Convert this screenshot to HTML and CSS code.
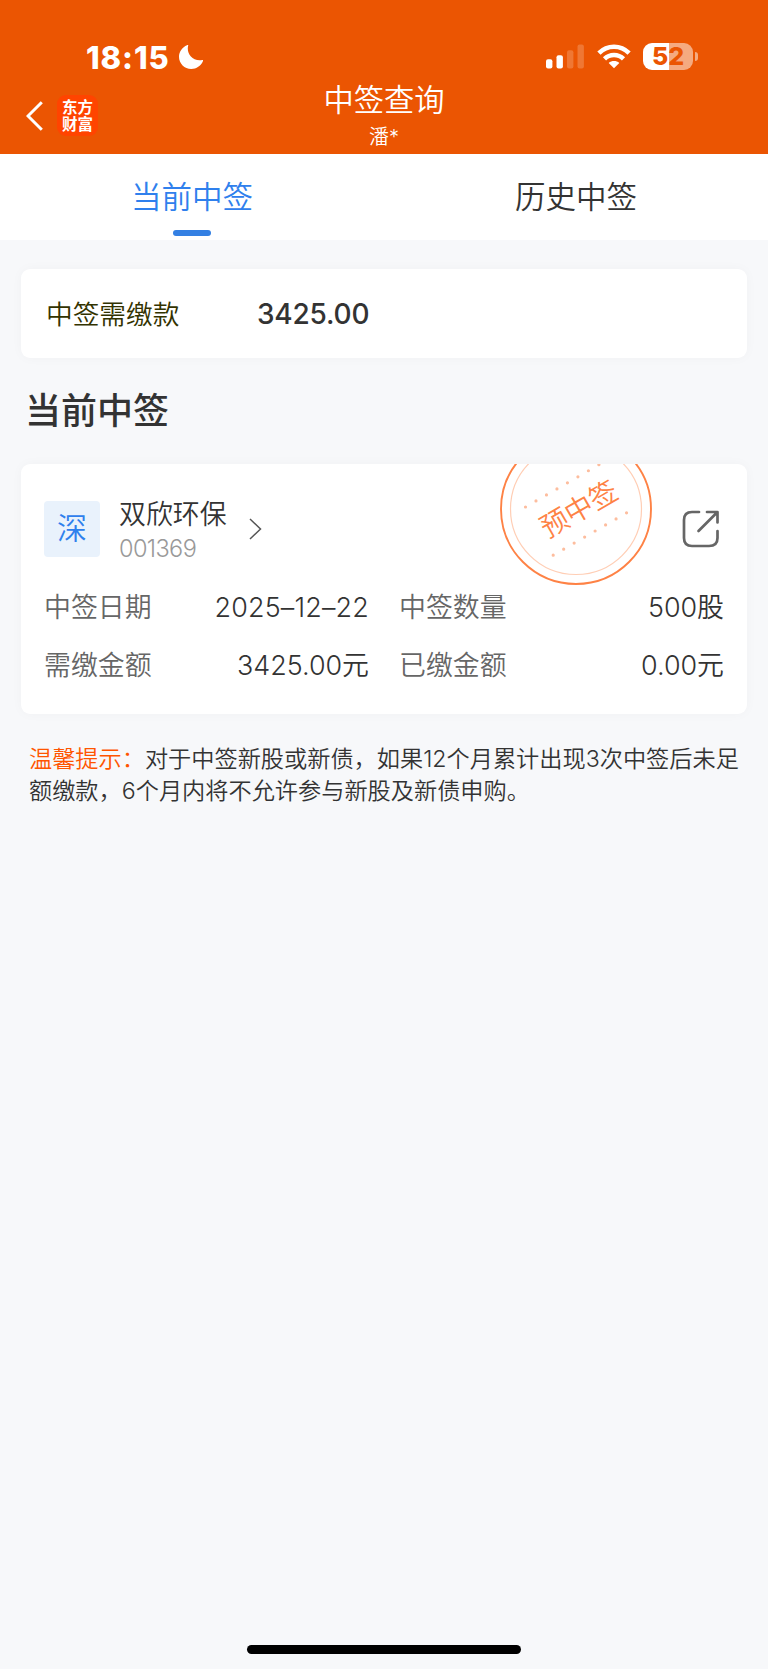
FILE: index.html
```
<!DOCTYPE html>
<html lang="zh-CN">
<head>
    <meta charset="UTF-8">
    <meta name="viewport" content="width=device-width, initial-scale=1.0">
    <title>中签查询</title>
    <link rel="stylesheet" href="styles.css">
</head>
<body>
    <header class="header">
        <div class="status-bar">
            <div class="status-left">
                <span class="time">18:15</span>
                <svg class="moon" width="24" height="24" viewBox="0 0 24 24">
                    <path d="M9.2 0.4C7.2 7.8 12.5 16.6 23.2 15.1C24.2 14.9 24.3 15.6 23.9 16.3C21.8 21 17.5 24 12.3 24C5.5 24 0 18.6 0 11.8C0 6.7 3.2 2.2 8 0.2C8.8 -0.1 9.4 -0.2 9.2 0.4Z" fill="#fff"/>
                </svg>
            </div>
            <div class="status-right">
                <svg width="38" height="25" viewBox="0 0 38 25" fill="#fff">
                    <rect x="0" y="15.3" width="6.4" height="9.2" rx="2"/>
                    <rect x="10.5" y="11.2" width="6.4" height="13.3" rx="2"/>
                    <rect x="21" y="6.2" width="6.4" height="18.3" rx="2" opacity="0.2"/>
                    <rect x="31.5" y="0.5" width="6.4" height="24" rx="2" opacity="0.2"/>
                </svg>
                <svg class="wifi" width="34" height="25" viewBox="0 0 34 25">
                    <g fill="none" stroke="#fff" stroke-width="4.5">
                        <path d="M1.9 9.2C10.3 0.7 23.7 0.7 32.1 9.2"/>
                        <path d="M7.5 14.9C12.8 9.6 21.2 9.6 26.5 14.9"/>
                    </g>
                    <path d="M17 24.3L11.7 19C14.7 16.4 19.3 16.4 22.3 19Z" fill="#fff"/>
                </svg>
                <div class="battery">
                    <div class="battery-body">52</div>
                    <div class="battery-cap"></div>
                </div>
            </div>
        </div>
        <div class="nav-bar">
            <div class="nav-left">
                <svg width="17" height="30" viewBox="0 0 17 30" fill="none" stroke="#fff" stroke-width="3">
                    <path d="M15.8 1.2L2 15L15.8 28.8"/>
                </svg>
                <div class="logo"><span>东方</span><span>财富</span></div>
            </div>
            <div class="nav-title">
                <h1>中签查询</h1>
                <p>潘*</p>
            </div>
        </div>
    </header>

    <nav class="tabs">
        <div class="tab active">当前中签</div>
        <div class="tab">历史中签</div>
    </nav>

    <main class="content">
        <section class="card summary">
            <span class="summary-label">中签需缴款</span>
            <span class="summary-value">3425.00</span>
        </section>

        <h2 class="section-title">当前中签</h2>

        <section class="card detail">
            <svg class="stamp" width="154" height="154" viewBox="0 0 154 154">
                <circle cx="77" cy="77" r="75" fill="none" stroke="#fe8245" stroke-width="1.9"/>
                <circle cx="77" cy="77" r="65.5" fill="none" stroke="#ffceb5" stroke-width="1.2"/>
                <g stroke="#fdbd9e" stroke-width="3.2" stroke-linecap="round" stroke-dasharray="0 12.1">
                    <path d="M26.5 75L102 31.5"/>
                    <path d="M54.2 123.2L130 79.4"/>
                </g>
                <text class="stamp-text" x="80" y="77" text-anchor="middle" dominant-baseline="central" transform="rotate(-30 80 77)">预中签</text>
            </svg>
            <div class="stock">
                <div class="market">深</div>
                <div class="stock-info">
                    <div class="stock-name">双欣环保</div>
                    <div class="stock-code">001369</div>
                </div>
                <svg class="arrow" width="13" height="22" viewBox="0 0 13 22" fill="none" stroke="#555" stroke-width="1.5">
                    <path d="M1 1L11.5 11L1 21"/>
                </svg>
                <svg class="share" width="38" height="38" viewBox="0 0 38 38" fill="none" stroke="#666" stroke-width="2.7" stroke-linecap="round" stroke-linejoin="round">
                    <path d="M17 2H10Q2 2 2 10V28Q2 36 10 36H27Q35.5 36 35.5 28V21"/>
                    <path d="M25 2H35.5V12.5M35 2.5L16.5 21"/>
                </svg>
            </div>
            <dl class="fields">
                <dt>中签日期</dt>
                <dd class="date">2025–12–22</dd>
                <dt class="second">中签数量</dt>
                <dd>500股</dd>
                <dt>需缴金额</dt>
                <dd>3425.00元</dd>
                <dt class="second">已缴金额</dt>
                <dd>0.00元</dd>
            </dl>
        </section>

        <p class="tips"><span class="tips-title">温馨提示：</span>对于中签新股或新债，如果12个月累计出现3次中签后未足<br>额缴款，6个月内将不允许参与新股及新债申购。</p>
    </main>

    <div class="home-indicator"></div>
</body>
</html>
```

FILE: styles.css
```
* {
    box-sizing: border-box;
    margin: 0;
    padding: 0;
}
body {
    display: flex;
    flex-direction: column;
    min-height: 1669px;
    background-color: #f7f8fa;
    color: #333;
    font-family: Inter, "Noto Sans CJK SC", sans-serif;
    font-weight: 350;
}
svg {
    display: block;
    flex: none;
}

/* Header */
.header {
    height: 154px;
    background-color: #eb5502;
    color: #fff;
}
.status-bar {
    display: flex;
    justify-content: space-between;
    height: 80px;
    padding: 43px 70px 0 86px;
}
.status-left,
.status-right {
    display: flex;
}
.time {
    width: 93px;
    font-size: 31px;
    font-weight: 800;
    line-height: 29px;
    letter-spacing: 0.9px;
}
.moon {
    margin-top: 2px;
}
.status-right svg {
    margin-top: 1px;
}
.wifi {
    margin: 0 12px 0 13px;
}
.battery {
    display: flex;
    align-items: center;
    height: 27px;
    gap: 2px;
}
.battery-body {
    width: 50px;
    height: 27px;
    border-radius: 9px;
    background: linear-gradient(to right, #fff 52%, #f5aa80 52%);
    color: #eb5502;
    font-size: 25px;
    font-weight: 800;
    line-height: 27px;
    text-align: center;
}
.battery-cap {
    width: 3px;
    height: 9px;
    border-radius: 0 4px 4px 0;
    background-color: #f5aa80;
}
.nav-bar {
    display: grid;
    grid-template-columns: 1fr 240px 1fr;
    height: 74px;
}
.nav-left {
    display: flex;
    align-items: center;
    gap: 14px;
    height: 71px;
    padding-left: 26px;
}
.logo {
    display: flex;
    flex-direction: column;
    align-items: center;
    justify-content: center;
    width: 41px;
    height: 41px;
    border-radius: 9px;
    background-color: #ff4400;
    font-size: 15.5px;
    font-weight: 700;
    line-height: 17px;
}
.nav-title {
    text-align: center;
}
.nav-title h1 {
    font-size: 30.3px;
    font-weight: 350;
    line-height: 40px;
}
.nav-title p {
    font-size: 20px;
    line-height: 35px;
}

/* Tabs */
.tabs {
    display: flex;
    height: 86px;
    background-color: #fff;
}
.tab {
    display: flex;
    flex: 1;
    flex-direction: column;
    align-items: center;
    font-size: 30.5px;
    line-height: 76px;
    padding-top: 5px;
}
.tab.active {
    color: #2f80ed;
}
.tab.active::after {
    content: '';
    flex: none;
    width: 38px;
    height: 6px;
    margin-top: -5px;
    border-radius: 3px;
    background-color: #3480e3;
}

/* Content */
.content {
    flex: 1;
    padding: 29px 21px 0;
}
.card {
    border-radius: 9px;
    background-color: #fff;
    box-shadow: 0 0 12px rgba(0, 0, 0, 0.03);
}
.summary {
    display: flex;
    align-items: center;
    height: 89px;
    padding-left: 25px;
}
.summary-label {
    width: 211px;
    padding-bottom: 3px;
    color: #333300;
    font-size: 26.7px;
}
.summary-value {
    font-size: 28px;
    font-weight: 500;
    letter-spacing: -0.2px;
}
.section-title {
    height: 106px;
    padding-left: 4px;
    font-size: 36px;
    font-weight: 500;
    line-height: 107px;
}
.detail {
    position: relative;
    height: 250px;
    padding: 37px 23px 0 23px;
    overflow: hidden;
}
.stamp {
    position: absolute;
    top: -32px;
    left: 477.5px;
}
.stamp-text {
    fill: #fe8245;
    font-size: 28px;
}
.stock {
    display: flex;
    align-items: center;
    height: 56px;
}
.market {
    width: 56px;
    height: 56px;
    border-radius: 4px;
    background-color: #e9f2fc;
    color: #2f80ed;
    font-size: 30px;
    line-height: 55px;
    text-align: center;
}
.stock-info {
    width: 129px;
    margin-left: 19px;
    padding-top: 4px;
}
.stock-name {
    font-size: 26.9px;
    line-height: 36px;
}
.stock-code {
    color: #999;
    font-size: 23.5px;
    line-height: 34px;
    letter-spacing: -0.6px;
}
.arrow {
    margin-left: 1px;
}
.share {
    margin: 0 4px 0 auto;
}
.fields {
    display: grid;
    grid-template-columns: 136px 189px 135px 1fr;
    grid-auto-rows: 58px;
    margin-top: 21px;
    font-size: 26.9px;
    line-height: 58px;
    white-space: nowrap;
}
.fields dt {
    color: #666;
}
.fields .second {
    padding-left: 30px;
}
.fields dd {
    text-align: right;
}
.fields .date {
    letter-spacing: 0.2px;
}
.tips {
    padding: 30px 0 0 8px;
    font-size: 23.2px;
    line-height: 31.5px;
    white-space: nowrap;
}
.tips-title {
    color: #ff5500;
}
.home-indicator {
    width: 274px;
    height: 9px;
    margin: 0 auto 15px;
    border-radius: 5px;
    background-color: #000;
}
```
